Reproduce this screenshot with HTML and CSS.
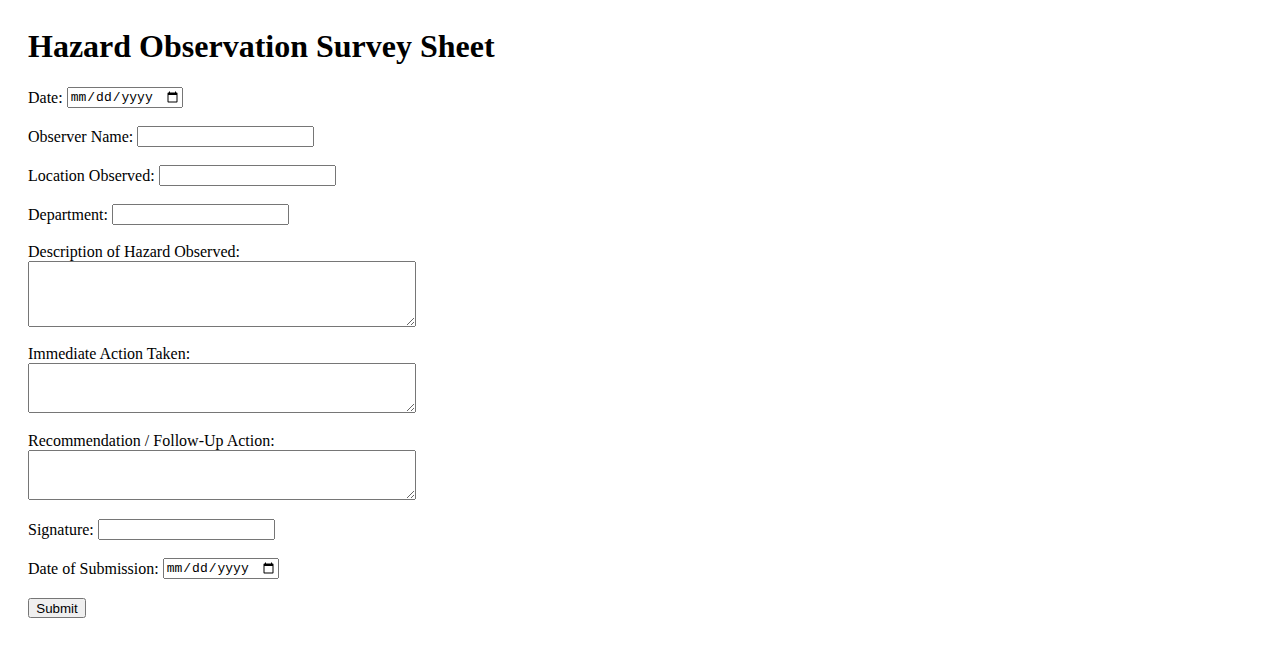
FILE: index.html
```html
<!DOCTYPE html>
<html lang="en">
<head>
<meta charset="utf-8">
<title>Hazard Observation Survey Sheet</title>
<link rel="stylesheet" href="styles.css">
</head>
<body>
<h1 class="title">Hazard Observation Survey Sheet</h1>
<form class="survey">
  <p class="row inline"><label for="date">Date:</label><input type="date" id="date" class="date-in"></p>
  <p class="row inline"><label for="obs">Observer Name:</label><input type="text" id="obs" class="text-in"></p>
  <p class="row inline"><label for="loc">Location Observed:</label><input type="text" id="loc" class="text-in"></p>
  <p class="row inline"><label for="dept">Department:</label><input type="text" id="dept" class="text-in"></p>
  <p class="row stacked stacked-first"><label for="desc" class="stack-label">Description of Hazard Observed:</label><textarea id="desc" class="area area-tall"></textarea></p>
  <p class="row stacked"><label for="act" class="stack-label">Immediate Action Taken:</label><textarea id="act" class="area"></textarea></p>
  <p class="row stacked"><label for="rec" class="stack-label">Recommendation / Follow-Up Action:</label><textarea id="rec" class="area"></textarea></p>
  <p class="row inline"><label for="sig">Signature:</label><input type="text" id="sig" class="text-in"></p>
  <p class="row inline"><label for="dos">Date of Submission:</label><input type="date" id="dos" class="date-in"></p>
  <p class="row inline"><button type="submit" class="submit">Submit</button></p>
</form>
</body>
</html>
```
FILE: styles.css
```css
body {
  margin: 0;
  padding: 28px;
  font-family: "Liberation Serif", "Times New Roman", serif;
  font-size: 16px;
  color: #000;
  background: #fff;
}
.title {
  font-size: 32px;
  font-weight: bold;
  margin: 0 0 21px;
}
.survey {
  margin: 0;
}
.row {
  margin: 0 0 16px;
}
.inline {
  display: flex;
  align-items: center;
  gap: 4px;
  height: 23px;
}
.stacked {
  display: flex;
  flex-direction: column;
  align-items: flex-start;
  margin-bottom: 18px;
}
.stacked-first {
  margin-bottom: 17px;
}
.stack-label {
  line-height: 19px;
}
.text-in {
  box-sizing: border-box;
  width: 177px;
  height: 21px;
  margin: 0;
}
.date-in {
  box-sizing: border-box;
  width: 116px;
  height: 21px;
  margin: 0;
  font-family: "Liberation Mono", "Courier New", monospace;
  font-size: 13px;
}
.area {
  box-sizing: border-box;
  width: 388px;
  height: 50px;
  margin: 0;
}
.area-tall {
  height: 66px;
}
.submit {
  box-sizing: border-box;
  width: 58px;
  height: 20px;
  margin: 0;
  font-family: "Liberation Sans", Arial, sans-serif;
  font-size: 13.33px;
}
```
